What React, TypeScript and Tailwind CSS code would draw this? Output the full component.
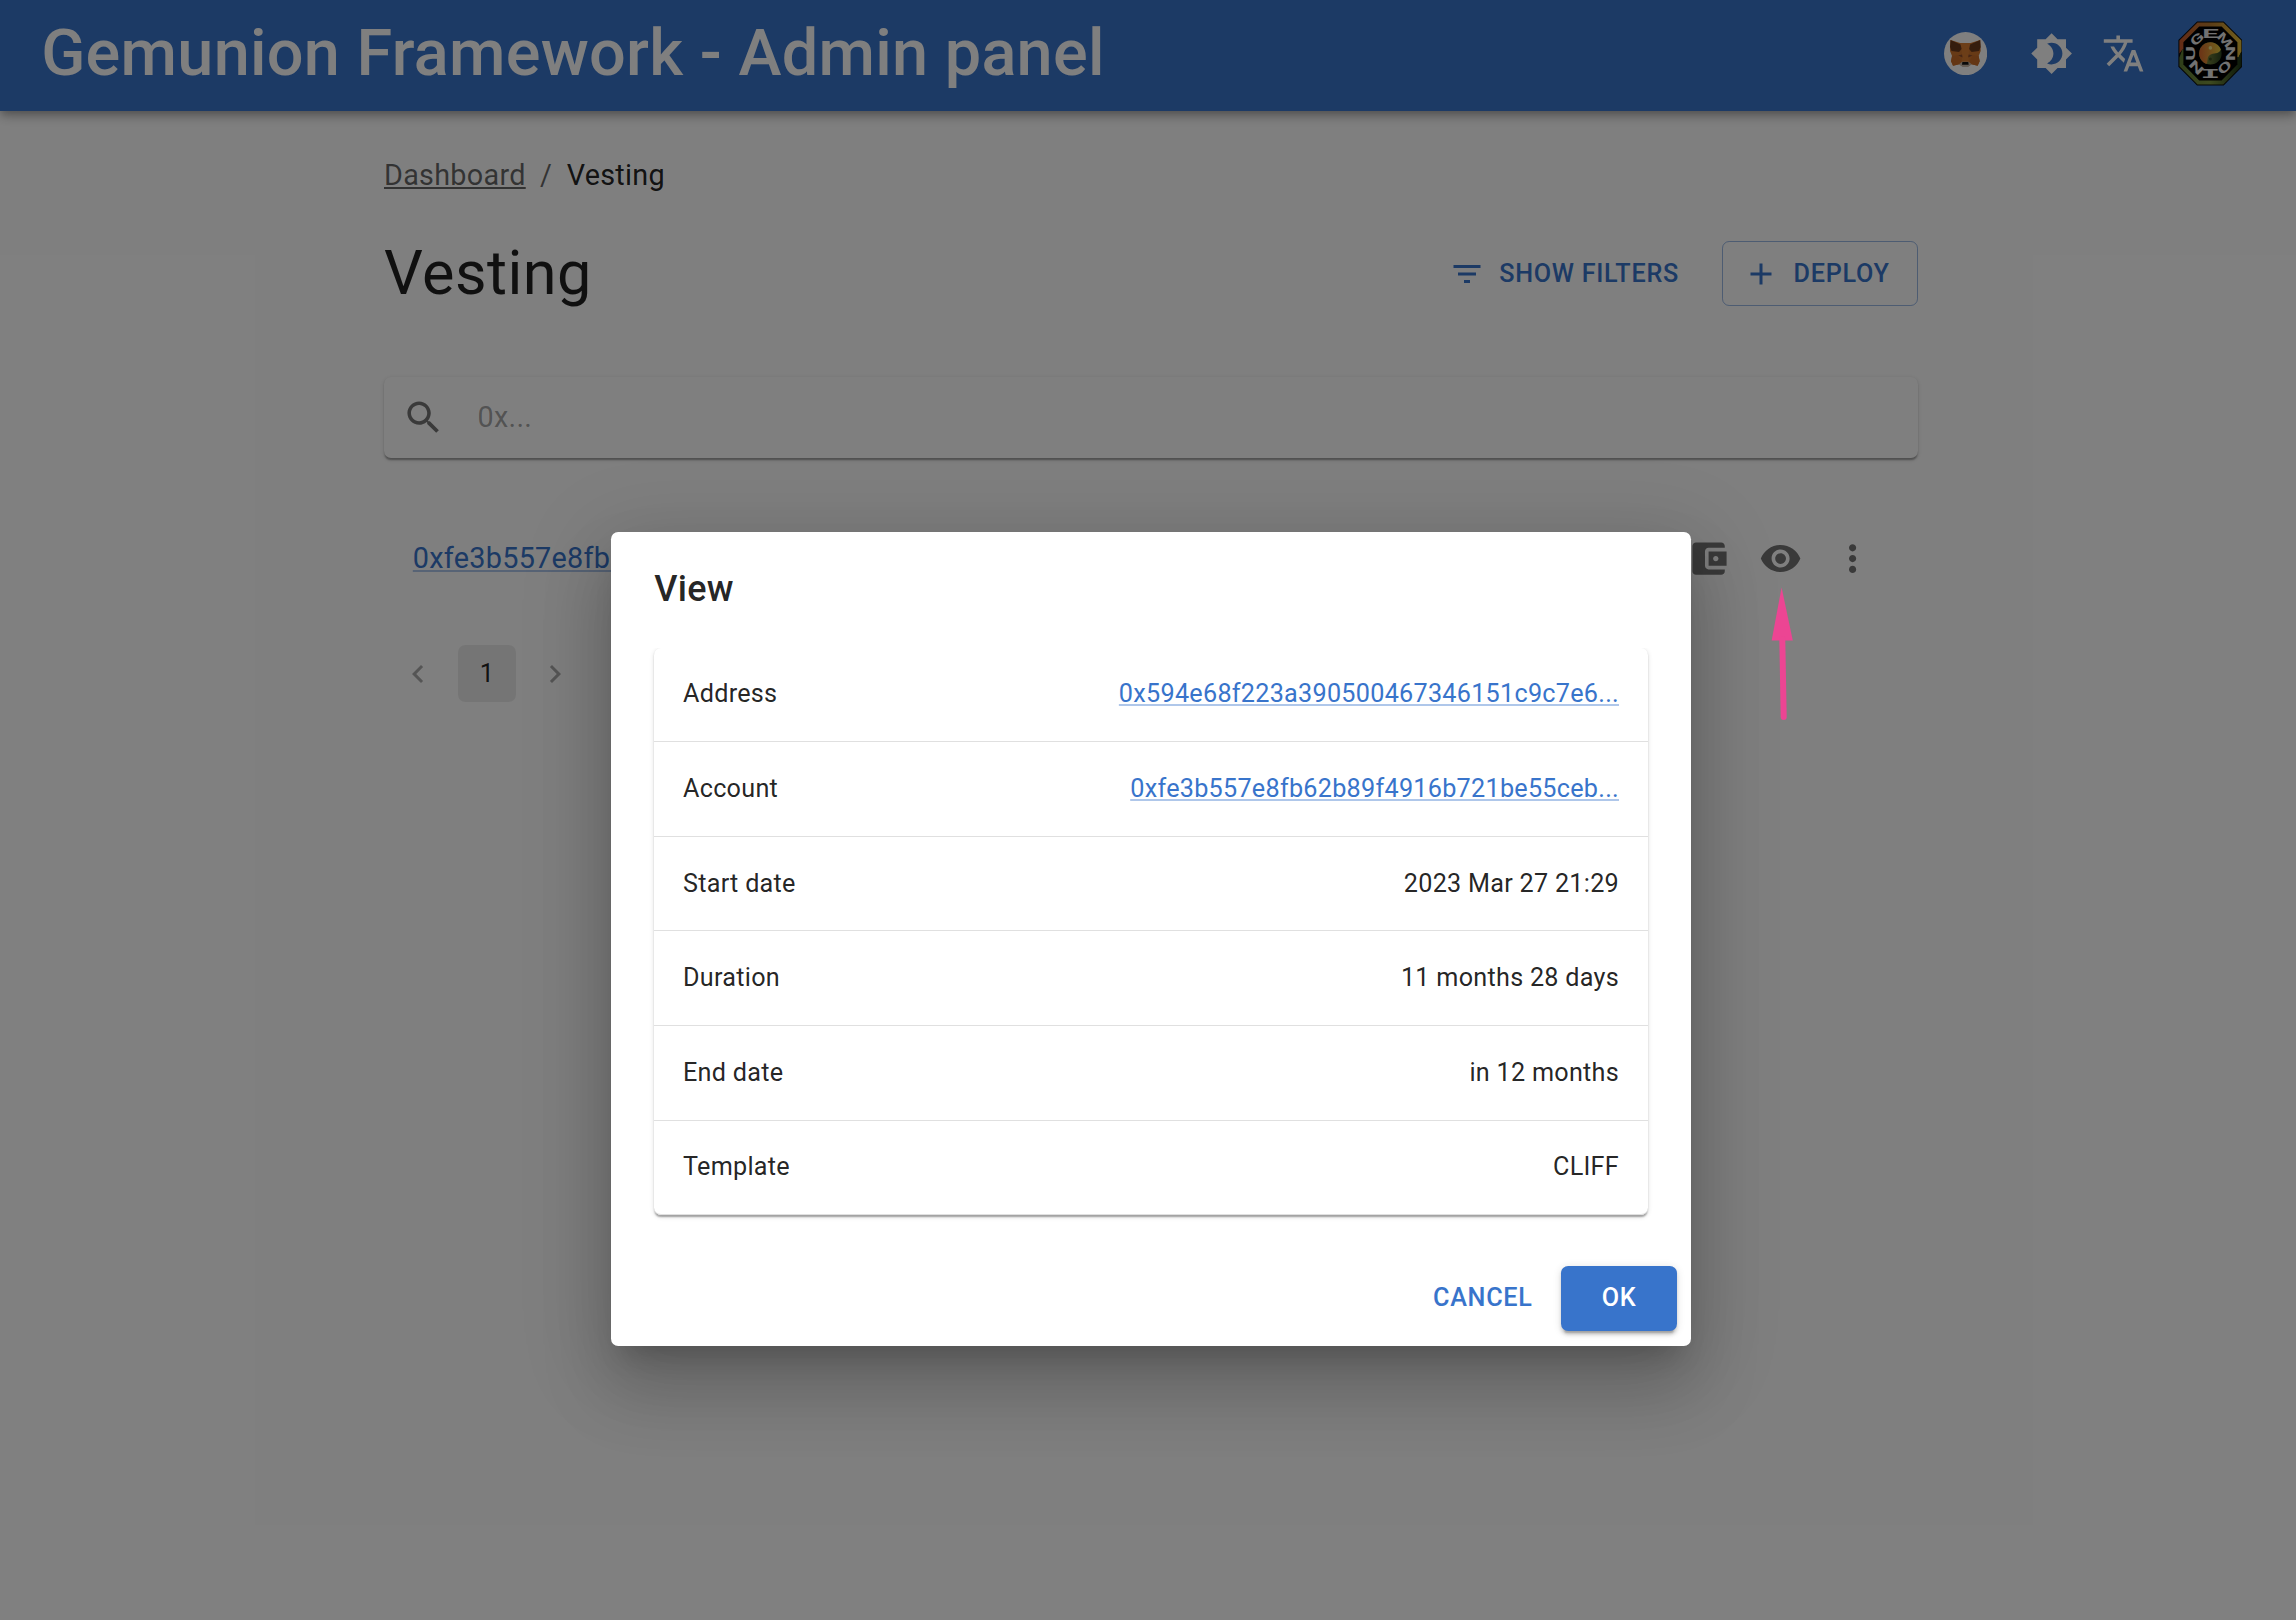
import React from "react";

const paths = {
  brightness:
    "M20 8.69V4h-4.69L12 .69 8.69 4H4v4.69L.69 12 4 15.31V20h4.69L12 23.31 15.31 20H20v-4.69L23.31 12 20 8.69zM12 18c-.89 0-1.74-.2-2.5-.55C11.56 16.5 13 14.42 13 12s-1.44-4.5-3.5-5.45C10.26 6.2 11.11 6 12 6c3.31 0 6 2.69 6 6s-2.69 6-6 6z",
  translate:
    "M12.87 15.07l-2.54-2.51.03-.03c1.74-1.94 2.98-4.17 3.71-6.53H17V4h-7V2H8v2H1v1.99h11.17C11.5 7.92 10.44 9.75 9 11.35 8.07 10.32 7.3 9.19 6.69 8h-2c.73 1.63 1.73 3.17 2.98 4.56l-5.09 5.02L4 19l5-5 3.11 3.11.76-2.04zM18.5 10h-2L12 22h2l1.12-3h4.75L21 22h2l-4.5-12zm-2.62 7l1.62-4.33L19.12 17h-3.24z",
  filter: "M10 18h4v-2h-4v2zM3 6v2h18V6H3zm3 7h12v-2H6v2z",
  add: "M19 13h-6v6h-2v-6H5v-2h6V5h2v6h6v2z",
  search:
    "M15.5 14h-.79l-.28-.27C15.41 12.59 16 11.11 16 9.5 16 5.91 13.09 3 9.5 3S3 5.91 3 9.5 5.91 16 9.5 16c1.61 0 3.09-.59 4.23-1.57l.27.28v.79l5 4.99L20.49 19l-4.99-5zm-6 0C7.01 14 5 11.99 5 9.5S7.01 5 9.5 5 14 7.01 14 9.5 11.99 14 9.5 14z",
  eye: "M12 4.5C7 4.5 2.73 7.61 1 12c1.73 4.39 6 7.5 11 7.5s9.27-3.11 11-7.5c-1.73-4.39-6-7.5-11-7.5zM12 17c-2.76 0-5-2.24-5-5s2.24-5 5-5 5 2.24 5 5-2.24 5-5 5zm0-8c-1.66 0-3 1.34-3 3s1.34 3 3 3 3-1.34 3-3-1.34-3-3-3z",
  wallet:
    "M21 18v1c0 1.1-.9 2-2 2H5c-1.11 0-2-.9-2-2V5c0-1.1.89-2 2-2h14c1.1 0 2 .9 2 2v1h-9c-1.11 0-2 .9-2 2v8c0 1.1.89 2 2 2h9zm-9-2h10V8H12v8zm4-2.5c-.83 0-1.5-.67-1.5-1.5s.67-1.5 1.5-1.5 1.5.67 1.5 1.5-.67 1.5-1.5 1.5z",
  more: "M12 8c1.1 0 2-.9 2-2s-.9-2-2-2-2 .9-2 2 .9 2 2 2zm0 2c-1.1 0-2 .9-2 2s.9 2 2 2 2-.9 2-2-.9-2-2-2zm0 6c-1.1 0-2 .9-2 2s.9 2 2 2 2-.9 2-2-.9-2-2-2z",
  before: "M15.41 7.41L14 6l-6 6 6 6 1.41-1.41L10.83 12z",
  next: "M10 6L8.59 7.41 13.17 12l-4.58 4.59L10 18l6-6z",
};

function Icon({ name, className }: { name: keyof typeof paths; className: string }) {
  return (
    <svg viewBox="0 0 24 24" fill="currentColor" className={className}>
      <path d={paths[name]} />
    </svg>
  );
}

function Fox() {
  return (
    <svg viewBox="0 0 43 43" className="h-[43.2px] w-[43.2px]">
      <circle cx="21.5" cy="21.5" r="21.5" fill="#fff" />
      <path d="M6.5 8 L16 11 H26.500 L36 8 L36.500 19 L34.500 24 L35.500 29 L33.500 33.500 L27.500 32.200 L24 34 H18.500 L15 32.200 L9 33.500 L7 29 L8 24 L6 19 Z" fill="#cf742c" />
      <path d="M16 11 H26.500 L24.800 19 L24.600 30 H18 L17.700 19 Z" fill="#d97c30" />
      <path d="M6.5 8 L16.500 12.500 L17.500 17 L15 20 L7.500 19 L6 15 Z" fill="#6b3a1d" />
      <path d="M36 8 L26 12.500 L25 17 L27.500 20 L35 19 L36.500 15 Z" fill="#6b3a1d" />
      <path d="M8 24 L14 23 L17.500 30 L15 32.200 L9 33.500 L7 29 Z" fill="#c96d29" />
      <path d="M34.500 24 L28.500 23 L25 30 L27.500 32.200 L33.500 33.500 L35.500 29 Z" fill="#c96d29" />
      <path d="M14 23.500 L18 22.500 L18.500 25.500 Z" fill="#8c4d2c" />
      <path d="M28.500 23.500 L24.500 22.500 L24 25.500 Z" fill="#8c4d2c" />
      <path d="M15 32 L18 29.500 H24.500 L27.500 32 L24 34.800 H18.500 Z" fill="#c9b9a8" />
      <path d="M18.300 29.800 H24.200 L24.600 32.500 H17.900 Z" fill="#141414" />
    </svg>
  );
}

const ring = [
  { c: "G", a: -43, s: 1.65 },
  { c: "E", a: 0, s: 2.35 },
  { c: "M", a: 47, s: 1.45 },
  { c: "N", a: 90, s: 1.75 },
  { c: "O", a: 135, s: 1.7 },
  { c: "I", a: 180, s: 2.7 },
  { c: "N", a: 225, s: 1.75 },
  { c: "U", a: 270, s: 1.8 },
];

function Avatar() {
  return (
    <svg viewBox="-32.4 -32.4 64.8 64.8" className="h-[64.8px] w-[64.8px]">
      <defs>
        <linearGradient id="rimTop" x1="0" x2="1">
          <stop offset="0" stopColor="#c8582c" />
          <stop offset="0.5" stopColor="#b87c30" />
          <stop offset="1" stopColor="#e4be3a" />
        </linearGradient>
        <linearGradient id="rimBottom" x1="0" x2="1">
          <stop offset="0" stopColor="#5f7c34" />
          <stop offset="0.5" stopColor="#7c9440" />
          <stop offset="1" stopColor="#1c3416" />
        </linearGradient>
        <linearGradient id="fire" x1="0" x2="1">
          <stop offset="0" stopColor="#d8662c" />
          <stop offset="1" stopColor="#e0c83c" />
        </linearGradient>
        <linearGradient id="leaf" x1="1" x2="0">
          <stop offset="0" stopColor="#2c4420" />
          <stop offset="1" stopColor="#96a048" />
        </linearGradient>
      </defs>
      <path d="M-13.300 -32 H13.300 L32 -13.300 V13.300 L13.300 32 H-13.300 L-32 13.300 V-13.300 Z" fill="#0a0a0a" />
      <path d="M-31 0 V-12.900 L-12.900 -31 H12.900 L31 -12.900 V-2 L28 4 L-28 -4 Z" fill="url(#rimTop)" />
      <path d="M31 -2 V12.900 L12.900 31 H-12.900 L-31 12.900 V4 L-28 -4 L28 4 Z" fill="url(#rimBottom)" />
      <path d="M-11.200 -27 H11.200 L27 -11.200 V11.200 L11.200 27 H-11.200 L-27 11.200 V-11.200 Z" fill="#000" />
      {ring.map((l, i) => (
        <g key={i} transform={`rotate(${l.a})`}>
          <text
            transform={`translate(0 -15.400) scale(${l.s} 1)`}
            textAnchor="middle"
            fontSize="12.500"
            fontWeight="700"
            fill="#e4e4e4"
            fontFamily={l.c === "I" ? "DejaVu Sans Mono" : "Roboto, sans-serif"}
          >
            {l.c}
          </text>
        </g>
      ))}
      <circle r="11.200" fill="url(#leaf)" />
      <path d="M-4 10.500 A11.200 11.200 0 1 1 10.500 -4 C8 1.500 3 -1 -0.500 1.500 C-4 4 -2 8 -4 10.500 Z" fill="url(#fire)" />
      <circle cx="0" cy="-5.500" r="1.800" fill="#ece088" />
      <circle cx="0" cy="5.500" r="1.500" fill="#3c4a20" />
    </svg>
  );
}

const link = "text-[#3874cb] underline decoration-[#3874cb]/40 decoration-2 underline-offset-2";

const rows = [
  { label: "Address", value: "0x594e68f223a390500467346151c9c7e6...", href: true },
  { label: "Account", value: "0xfe3b557e8fb62b89f4916b721be55ceb...", href: true },
  { label: "Start date", value: "2023 Mar 27 21:29" },
  { label: "Duration", value: "11 months 28 days" },
  { label: "End date", value: "in 12 months" },
  { label: "Template", value: "CLIFF" },
];

const paperShadow =
  "shadow-[0_3.6px_1.8px_-1.8px_rgba(0,0,0,0.2),0_1.8px_1.8px_0_rgba(0,0,0,0.14),0_1.8px_5.4px_0_rgba(0,0,0,0.12)]";

const button =
  "flex h-[65px] items-center rounded-[7.2px] text-[25.2px] leading-[44px] font-medium tracking-[0.02857em]";

function Header() {
  return (
    <header className="flex h-[111px] items-center justify-between bg-[#3874cb] pr-[53.6px] pl-[41.2px] text-white shadow-[0_3.6px_7.2px_-1.8px_rgba(0,0,0,0.2),0_7.2px_9px_0_rgba(0,0,0,0.14),0_1.8px_18px_0_rgba(0,0,0,0.12)]">
      <h1 className="-mt-[6px] text-[64.8px] leading-[76px] font-medium tracking-[0.28px] whitespace-nowrap">
        Gemunion Framework - Admin panel
      </h1>
      <div className="-mt-[4px] flex items-center">
        <Fox />
        <Icon name="brightness" className="ml-[43.2px] h-[43.2px] w-[43.2px]" />
        <Icon name="translate" className="ml-[28.8px] h-[43.2px] w-[43.2px]" />
        <div className="ml-[32.4px]">
          <Avatar />
        </div>
      </div>
    </header>
  );
}

function Content() {
  return (
    <main className="ml-[384px] w-[1534px] text-black/87">
      <nav className="flex pt-[43px] text-[28.8px] leading-[43.2px] tracking-[0.00938em]">
        <a className="text-black/60 underline decoration-black/60 decoration-2 underline-offset-2">Dashboard</a>
        <span className="mx-[14.4px] text-black/60">/</span>
        <span>Vesting</span>
      </nav>
      <div className="mt-[33.8px] flex h-[86px] items-center justify-between">
        <h2 className="text-[61.2px] leading-[75.6px] tracking-[0.00735em]">Vesting</h2>
        <div className="-mt-px flex items-center gap-[28.8px] text-[#3874cb]">
          <button className={button + " px-[14.4px]"}>
            <Icon name="filter" className="mr-[14.4px] h-[36px] w-[36px]" />
            SHOW FILTERS
          </button>
          <button className={button + " border border-[#3874cb]/50 pr-[27.4px] pl-[20px]"}>
            <Icon name="add" className="mr-[14.4px] h-[36px] w-[36px]" />
            DEPLOY
          </button>
        </div>
      </div>
      <div className={"mt-[60px] flex h-[81px] items-center rounded-[7.2px] bg-white pl-[18px] " + paperShadow}>
        <Icon name="search" className="h-[43.2px] w-[43.2px] text-black/54" />
        <span className="-mt-px ml-[32.4px] text-[28.8px] leading-[42px] tracking-[0.00938em] text-black/37">0x...</span>
      </div>
      <div className="mt-[64.4px] flex h-[72px] items-center justify-between pr-[29.2px] pl-[28.8px]">
        <a className={link + " text-[28.8px] leading-[43.2px] tracking-[0.00938em]"}>0xfe3b557e8fb6</a>
        <div className="flex gap-[28.8px] pr-[14.4px] text-black/54">
          <Icon name="wallet" className="h-[43.2px] w-[43.2px]" />
          <Icon name="eye" className="h-[43.2px] w-[43.2px]" />
          <Icon name="more" className="h-[43.2px] w-[43.2px]" />
        </div>
      </div>
      <div className="mt-[50.4px] flex gap-[10.8px] pl-[5.6px] text-[25.2px] leading-[36px]">
        <div className="flex h-[57.6px] w-[57.6px] items-center justify-center">
          <Icon name="before" className="h-[36px] w-[36px] text-black/33" />
        </div>
        <div className="flex h-[57.6px] w-[57.6px] items-center justify-center rounded-[7.2px] bg-black/8">1</div>
        <div className="flex h-[57.6px] w-[57.6px] items-center justify-center">
          <Icon name="next" className="h-[36px] w-[36px] text-black/33" />
        </div>
      </div>
    </main>
  );
}

function Dialog() {
  return (
    <div className="mt-[532px] ml-[611px] flex h-[814px] w-[1080px] flex-col rounded-[7.2px] bg-white text-black/87 shadow-[0_19.8px_27px_-12.6px_rgba(0,0,0,0.2),0_43.2px_68.4px_5.4px_rgba(0,0,0,0.14),0_16.2px_82.8px_14.4px_rgba(0,0,0,0.12)]">
      <h3 className="px-[43.2px] pt-[28.8px] pb-[29.2px] text-[36px] leading-[57.6px] font-medium tracking-[0.0075em]">
        View
      </h3>
      <div className="overflow-hidden px-[43.2px] pb-[20px]">
        <div className={"rounded-[7.2px] " + paperShadow}>
          {rows.map((r) => (
            <div
              key={r.label}
              className="flex h-[94.6px] items-center justify-between border-b border-[#e0e0e0] px-[28.8px] text-[25.2px] leading-[36px] tracking-[0.01071em] last:rounded-b-[7.2px]"
            >
              <span>{r.label}</span>
              {r.href ? <a className={link}>{r.value}</a> : <span>{r.value}</span>}
            </div>
          ))}
        </div>
      </div>
      <div className="mt-auto flex justify-end gap-[14.4px] pr-[14.4px] pb-[15px]">
        <button className={button + " px-[14.4px] pb-px text-[#3874cb]"}>CANCEL</button>
        <button
          className={
            button +
            " w-[115.2px] justify-center bg-[#3874cb] pb-px text-white shadow-[0_5.4px_1.8px_-3.6px_rgba(0,0,0,0.2),0_3.6px_3.6px_0_rgba(0,0,0,0.14),0_1.8px_9px_0_rgba(0,0,0,0.12)]"
          }
        >
          OK
        </button>
      </div>
    </div>
  );
}

export default function App() {
  return (
    <div className="relative h-[1620px] w-full overflow-hidden bg-white font-['Roboto',sans-serif]">
      <Header />
      <Content />
      <div className="absolute inset-0 bg-black/50">
        <Dialog />
      </div>
      <svg viewBox="0 0 24 134" className="absolute top-[587px] left-[1770px] h-[134px] w-[24px]">
        <path d="M11.600 0.500 L22.800 53.500 H1.700 Z" fill="#ec4593" />
        <path d="M12.300 52 L13.700 130" stroke="#ec4593" strokeWidth="6" strokeLinecap="round" />
      </svg>
    </div>
  );
}
